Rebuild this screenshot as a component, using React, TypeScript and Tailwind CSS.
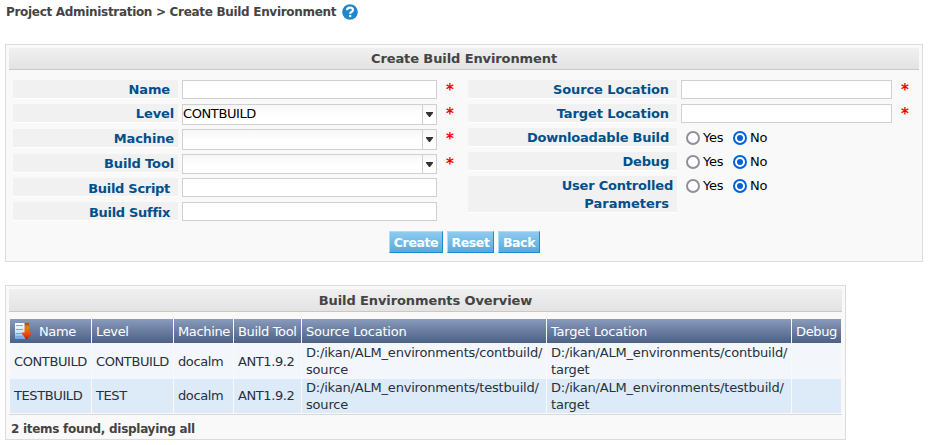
import React from "react";

const inputBox = "border border-[#d0d0d0] bg-white";
const labelBox =
  "flex shrink-0 justify-end border-b border-white bg-[#f1f1f1] text-right font-bold leading-[18px] text-[#00508c]";

function Star() {
  return <span className="ml-[9px] w-[9px] text-[15px] font-bold leading-[21px] text-[#ff0000]">*</span>;
}

type FieldProps = { label: string; kind?: "text" | "select"; value?: string; required?: boolean; row: string; box: string; low?: boolean };

function LeftField({ label, kind = "text", value, required, row, box, low }: FieldProps) {
  return (
    <div className={`flex items-start ${row}`}>
      <div
        className={`${labelBox} h-[19px] w-[165px] ${low ? "pt-[2px] tracking-[-0.3px]" : "pt-px tracking-[-0.14px]"} ${kind === "select" ? "pr-1" : "pr-2"}`}
      >
        {label}
      </div>
      {kind === "select" ? (
        <div className={`ml-1 flex w-[255px] border border-[#d0d0d0] bg-linear-to-b from-[#f7f7f7] to-white to-60% ${box}`}>
          <div className="flex-1 text-[13px] leading-[18px] tracking-[-0.4px] text-black">{value}</div>
          <div className="flex w-[14px] items-center justify-center border-l border-[#d0d0d0]">
            <svg width="7" height="5" viewBox="0 0 7 5">
              <path d="M0 0H7V1L4 5H3L0 1Z" fill="#333" />
            </svg>
          </div>
        </div>
      ) : (
        <div className={`ml-1 w-[255px] ${inputBox} ${box}`} />
      )}
      {required && <Star />}
    </div>
  );
}

function Radio({ on }: { on?: boolean }) {
  return (
    <span
      className={`flex size-[14px] items-center justify-center rounded-full border-2 bg-white ${on ? "border-[#0060df]" : "border-[#8f8f9d]"}`}
    >
      {on && <span className="size-[6px] rounded-full bg-[#0060df]" />}
    </span>
  );
}

function RadioRow({ label, second }: { label: string; second?: string }) {
  return (
    <div className={`flex items-start ${second ? "h-[37px]" : "h-6"}`}>
      <div className={`${labelBox} w-[209px] flex-col justify-start! pt-px tracking-[-0.2px] ${second ? "h-[37px]" : "h-[19px]"}`}>
        <div className={second ? "pr-1" : "pr-2"}>{label}</div>
        {second && <div className="pr-2 tracking-[0px]">{second}</div>}
      </div>
      <div className="ml-[9px] mt-[3px] flex items-center text-[13px] leading-[14px] tracking-[-0.3px] text-black">
        <Radio />
        <span className="ml-[3px] w-[30px] tracking-[-0.2px]">Yes</span>
        <Radio on />
        <span className="ml-[3px]">No</span>
      </div>
    </div>
  );
}

function RightInput({ label }: { label: string }) {
  return (
    <div className="flex h-6 items-start">
      <div className={`${labelBox} h-[19px] w-[209px] pr-2 pt-px tracking-[-0.1px]`}>{label}</div>
      <div className={`ml-1 h-[19px] w-[211px] ${inputBox}`} />
      <Star />
    </div>
  );
}

function PanelTitle({ children }: { children: React.ReactNode }) {
  return (
    <h2 className="flex items-center justify-center border-b border-[#c8c8c8] bg-linear-to-b from-[#f0f0f0] to-[#e3e3e3] font-bold tracking-[-0.1px] text-[#444]">
      {children}
    </h2>
  );
}

function Button({ label, width }: { label: string; width: string }) {
  return (
    <button
      className={`h-[22px] whitespace-nowrap border border-b-[#1c8ccc] border-l-[#a3e0fa] border-r-[#1c8ccc] border-t-[#a3e0fa] bg-linear-to-b from-[#8ecbef] to-[#55aadf] pt-px text-[12.5px] font-bold leading-5 tracking-[-0.4px] text-white ${width}`}
    >
      {label}
    </button>
  );
}

function SortIcon() {
  return (
    <svg width="17" height="17" viewBox="0 0 17 17" className="shrink-0">
      <defs>
        <linearGradient id="page" x1="0" y1="0" x2="0" y2="1">
          <stop offset="0" stopColor="#fff" />
          <stop offset=".55" stopColor="#cfe5fb" />
          <stop offset="1" stopColor="#55a9f5" />
        </linearGradient>
        <linearGradient id="arrow" x1="0" y1="0" x2="0" y2="1">
          <stop offset="0" stopColor="#a04a08" />
          <stop offset=".25" stopColor="#f08000" />
          <stop offset=".7" stopColor="#e8480c" />
          <stop offset="1" stopColor="#b81800" />
        </linearGradient>
      </defs>
      <path d="M1 0H11V16H1Z" fill="url(#page)" />
      <path d="M2 2.5H9M2 6.5H9M2 10.5H8M2 13.5H9" stroke="#7fa3d6" />
      <path d="M10.5 0H15V9.5H17V11L13 16.5H12.5L8 11V9.5H10.5Z" fill="url(#arrow)" />
    </svg>
  );
}

const columns = ["Name", "Level", "Machine", "Build Tool", "Source Location", "Target Location", "Debug"];
const grid = "grid grid-cols-[81px_81px_59px_67px_244px_244px_49px] gap-x-px";
const rows = [
  ["CONTBUILD", "CONTBUILD", "docalm", "ANT1.9.2", "D:/ikan/ALM_environments/contbuild/|source", "D:/ikan/ALM_environments/contbuild/|target", ""],
  ["TESTBUILD", "TEST", "docalm", "ANT1.9.2", "D:/ikan/ALM_environments/testbuild/|source", "D:/ikan/ALM_environments/testbuild/|target", ""],
];

export default function App() {
  return (
    <div className="h-[445px] w-[928px] overflow-hidden bg-white pl-[5px] font-['DejaVu_Sans',Verdana,sans-serif] text-[13px] tracking-[-0.35px]">
      <header className="flex h-11 items-start pl-px pt-1 text-[12px] font-bold leading-4 tracking-[-0.31px] text-[#444]">
        <span className="whitespace-nowrap">Project Administration &gt; Create Build Environment</span>
        <svg width="16" height="16" viewBox="0 0 16 16" className="ml-[6px]">
          <circle cx="8" cy="8" r="7.8" fill="#1e86cc" />
          <path d="M5.1 6.2C5.1 2.8 11 2.9 11 6C11 7.9 8.2 7.7 8.2 9.8" fill="none" stroke="#fff" strokeWidth="2.2" />
          <rect x="7.1" y="10.9" width="2.2" height="2.2" fill="#fff" />
        </svg>
      </header>

      <section className="h-[218px] w-[918px] border border-[#dcdcdc] bg-[#f9f9f9] p-[3px]">
        <div className="grid h-[22px]"><PanelTitle>Create Build Environment</PanelTitle></div>
        <div className="flex h-[161px] pl-1 pt-[10px]">
          <div className="w-[455px]">
            <LeftField label="Name" required row="h-6" box="h-[19px]" />
            <LeftField label="Level" kind="select" value="CONTBUILD" required row="h-[25px]" box="h-[21px]" />
            <LeftField label="Machine" kind="select" required row="h-[25px]" box="h-[21px]" />
            <LeftField label="Build Tool" kind="select" required row="h-6" box="h-5" />
            <LeftField label="Build Script" low row="h-6" box="h-[19px]" />
            <LeftField label="Build Suffix" low row="h-6" box="h-[19px]" />
          </div>
          <div>
            <RightInput label="Source Location" />
            <RightInput label="Target Location" />
            <RadioRow label="Downloadable Build" />
            <RadioRow label="Debug" />
            <RadioRow label="User Controlled" second="Parameters" />
          </div>
        </div>
        <div className="flex gap-1 pl-[380px]">
          <Button label="Create" width="w-[54px]" />
          <Button label="Reset" width="w-[47px]" />
          <Button label="Back" width="w-[42px]" />
        </div>
      </section>

      <section className="mt-[23px] h-[155px] w-[841px] border border-[#dcdcdc] bg-[#f9f9f9] p-[3px]">
        <div className="grid h-[23px]"><PanelTitle><span className="pt-px">Build Environments Overview</span></PanelTitle></div>
        <div className="mt-[7px] h-24 border-b border-[#d8d8d8] px-px">
          <div className={`${grid} h-6`}>
            {columns.map((c, i) => (
              <div
                key={c}
                className={`flex items-center gap-2 whitespace-nowrap bg-linear-to-b from-[#8a9bbb] to-[#4c6186] pl-1 pt-px text-white ${i === 4 || i === 5 ? "tracking-[-0.22px]" : ""}`}
              >
                {i === 0 && <SortIcon />}
                {c}
              </div>
            ))}
          </div>
          {rows.map((r, ri) => (
            <div key={ri} className={`${grid} ${ri === 0 ? "h-9" : "h-[34px]"}`}>
              {r.map((cell, i) => (
                <div
                  key={i}
                  className={`flex flex-col justify-center whitespace-nowrap pl-1 leading-[17px] text-[#263040] ${i > 3 ? "tracking-[-0.19px]" : "tracking-[-0.4px]"} ${ri === 0 ? "bg-[#f3f6fb]" : "bg-[#dcebf7]"} ${ri === 1 && i < 4 ? "pb-[2px]" : ""}`}
                >
                  {cell.split("|").map((line) => <div key={line}>{line}</div>)}
                </div>
              ))}
            </div>
          ))}
        </div>
        <div className="pl-[2px] pt-[6px] text-[12px] font-bold leading-4 tracking-[-0.28px] text-[#444]">2 items found, displaying all</div>
      </section>
    </div>
  );
}
